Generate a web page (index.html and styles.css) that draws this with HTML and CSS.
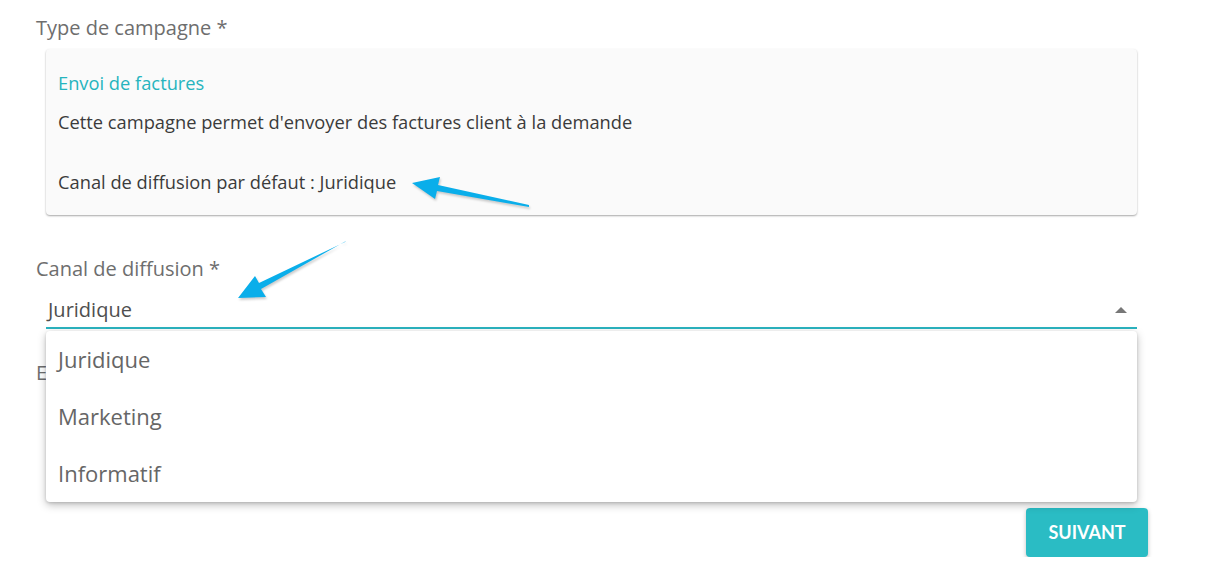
FILE: index.html
```html
<!DOCTYPE html>
<html>

	<head>
		<meta charset="UTF-8">
		<title>Nouvelle campagne</title>
		<link rel="stylesheet" href="styles.css">
	</head>

	<body>
		<div class="form">
			<div class="field">
				<div class="label">Type de campagne *</div>
				<div class="card">
					<p class="card_title">Envoi de factures</p>
					<p>Cette campagne permet d'envoyer des factures client à la demande</p>
					<p class="card_gap">Canal de diffusion par défaut : Juridique</p>
				</div>
			</div>

			<div class="field field_select">
				<div class="label">Canal de diffusion *</div>
				<div class="select">
					<span class="select_value">Juridique</span>
					<span class="select_caret"></span>
					<ul class="menu">
						<li>Juridique</li>
						<li>Marketing</li>
						<li>Informatif</li>
					</ul>
				</div>
			</div>

			<div class="field field_next">
				<div class="label">Expéditeur *</div>
				<div class="select select_empty"></div>
			</div>

			<div class="actions">
				<a href="javascript:" class="btn">SUIVANT</a>
			</div>
		</div>

		<!-- flèches d'annotation -->
		<svg class="notes" width="1215" height="573" viewBox="0 0 1215 573">
			<polygon points="529,207 437,191 435,199 412,183 440,177 438,185 529,205" />
			<polygon points="346,241 261,289 266,297 238,298 255,276 259,283 345,242" />
		</svg>
	</body>

</html>
```

FILE: styles.css
```css
html,
body {
	margin: 0;
	background: #fff;
}

body {
	font-family: "Open Sans", "Liberation Sans", sans-serif;
	color: #3b3b3b;
}

.form {
	width: 1112px;
	padding: 17px 0 0 36px;
}

.label {
	font-size: 20px;
	line-height: 22px;
	color: #6e6e6e;
}

.card {
	margin: 10px 11px 0 10px;
	padding: 23px 12px 22px;
	background-color: #fafafa;
	border-radius: 4px;
	box-shadow: 0 1px 2px rgba(0, 0, 0, .35);
}

.card p {
	margin: 0;
	font-size: 18.3px;
	line-height: 22px;
}

.card p + p {
	margin-top: 17px;
}

.card p.card_gap {
	margin-top: 38px;
}

.card_title {
	color: #26b4be;
}

.field_select {
	margin-top: 43px;
}

.select {
	position: relative;
	display: flex;
	align-items: flex-end;
	margin: 0 11px 0 10px;
	padding: 0 2px 5px;
	box-sizing: border-box;
	height: 49px;
	border-bottom: 2px solid #2bb3bf;
	font-size: 20px;
	line-height: 24px;
	color: #4f4f4f;
}

.select_value {
	flex: 1;
}

.select_caret {
	width: 0;
	height: 0;
	margin: 0 8px 9px 0;
	border-left: 6px solid transparent;
	border-right: 6px solid transparent;
	border-bottom: 6px solid #777;
}

.select_empty {
	border-bottom: 1px solid #ccc;
}

.menu {
	position: absolute;
	z-index: 2;
	left: 0;
	right: 0;
	top: 51px;
	margin: 0;
	padding: 0;
	list-style: none;
	background: #fff;
	border-radius: 4px;
	box-shadow: 0 3px 8px rgba(0, 0, 0, .25), 0 1px 3px rgba(0, 0, 0, .15);
}

.menu li {
	height: 57px;
	padding-left: 12px;
	line-height: 57px;
	font-size: 22px;
	color: #666;
}

.field_next {
	margin-top: 33px;
}

.actions {
	display: flex;
	justify-content: flex-end;
	margin-top: 75px;
}

.btn {
	display: inline-block;
	width: 122px;
	height: 49px;
	line-height: 49px;
	text-align: center;
	border-radius: 4px;
	background-color: #2abcc4;
	box-shadow: 0 2px 4px rgba(0, 0, 0, .25);
	font-family: Lato, "Open Sans", sans-serif;
	font-weight: bold;
	font-size: 18px;
	color: #fff;
	text-decoration: none;
}

.notes {
	position: absolute;
	left: 0;
	top: 0;
	z-index: 3;
	pointer-events: none;
}

.notes polygon {
	fill: #0aaeea;
	filter: drop-shadow(1px 2px 1px rgba(0, 0, 0, .2));
}
```
